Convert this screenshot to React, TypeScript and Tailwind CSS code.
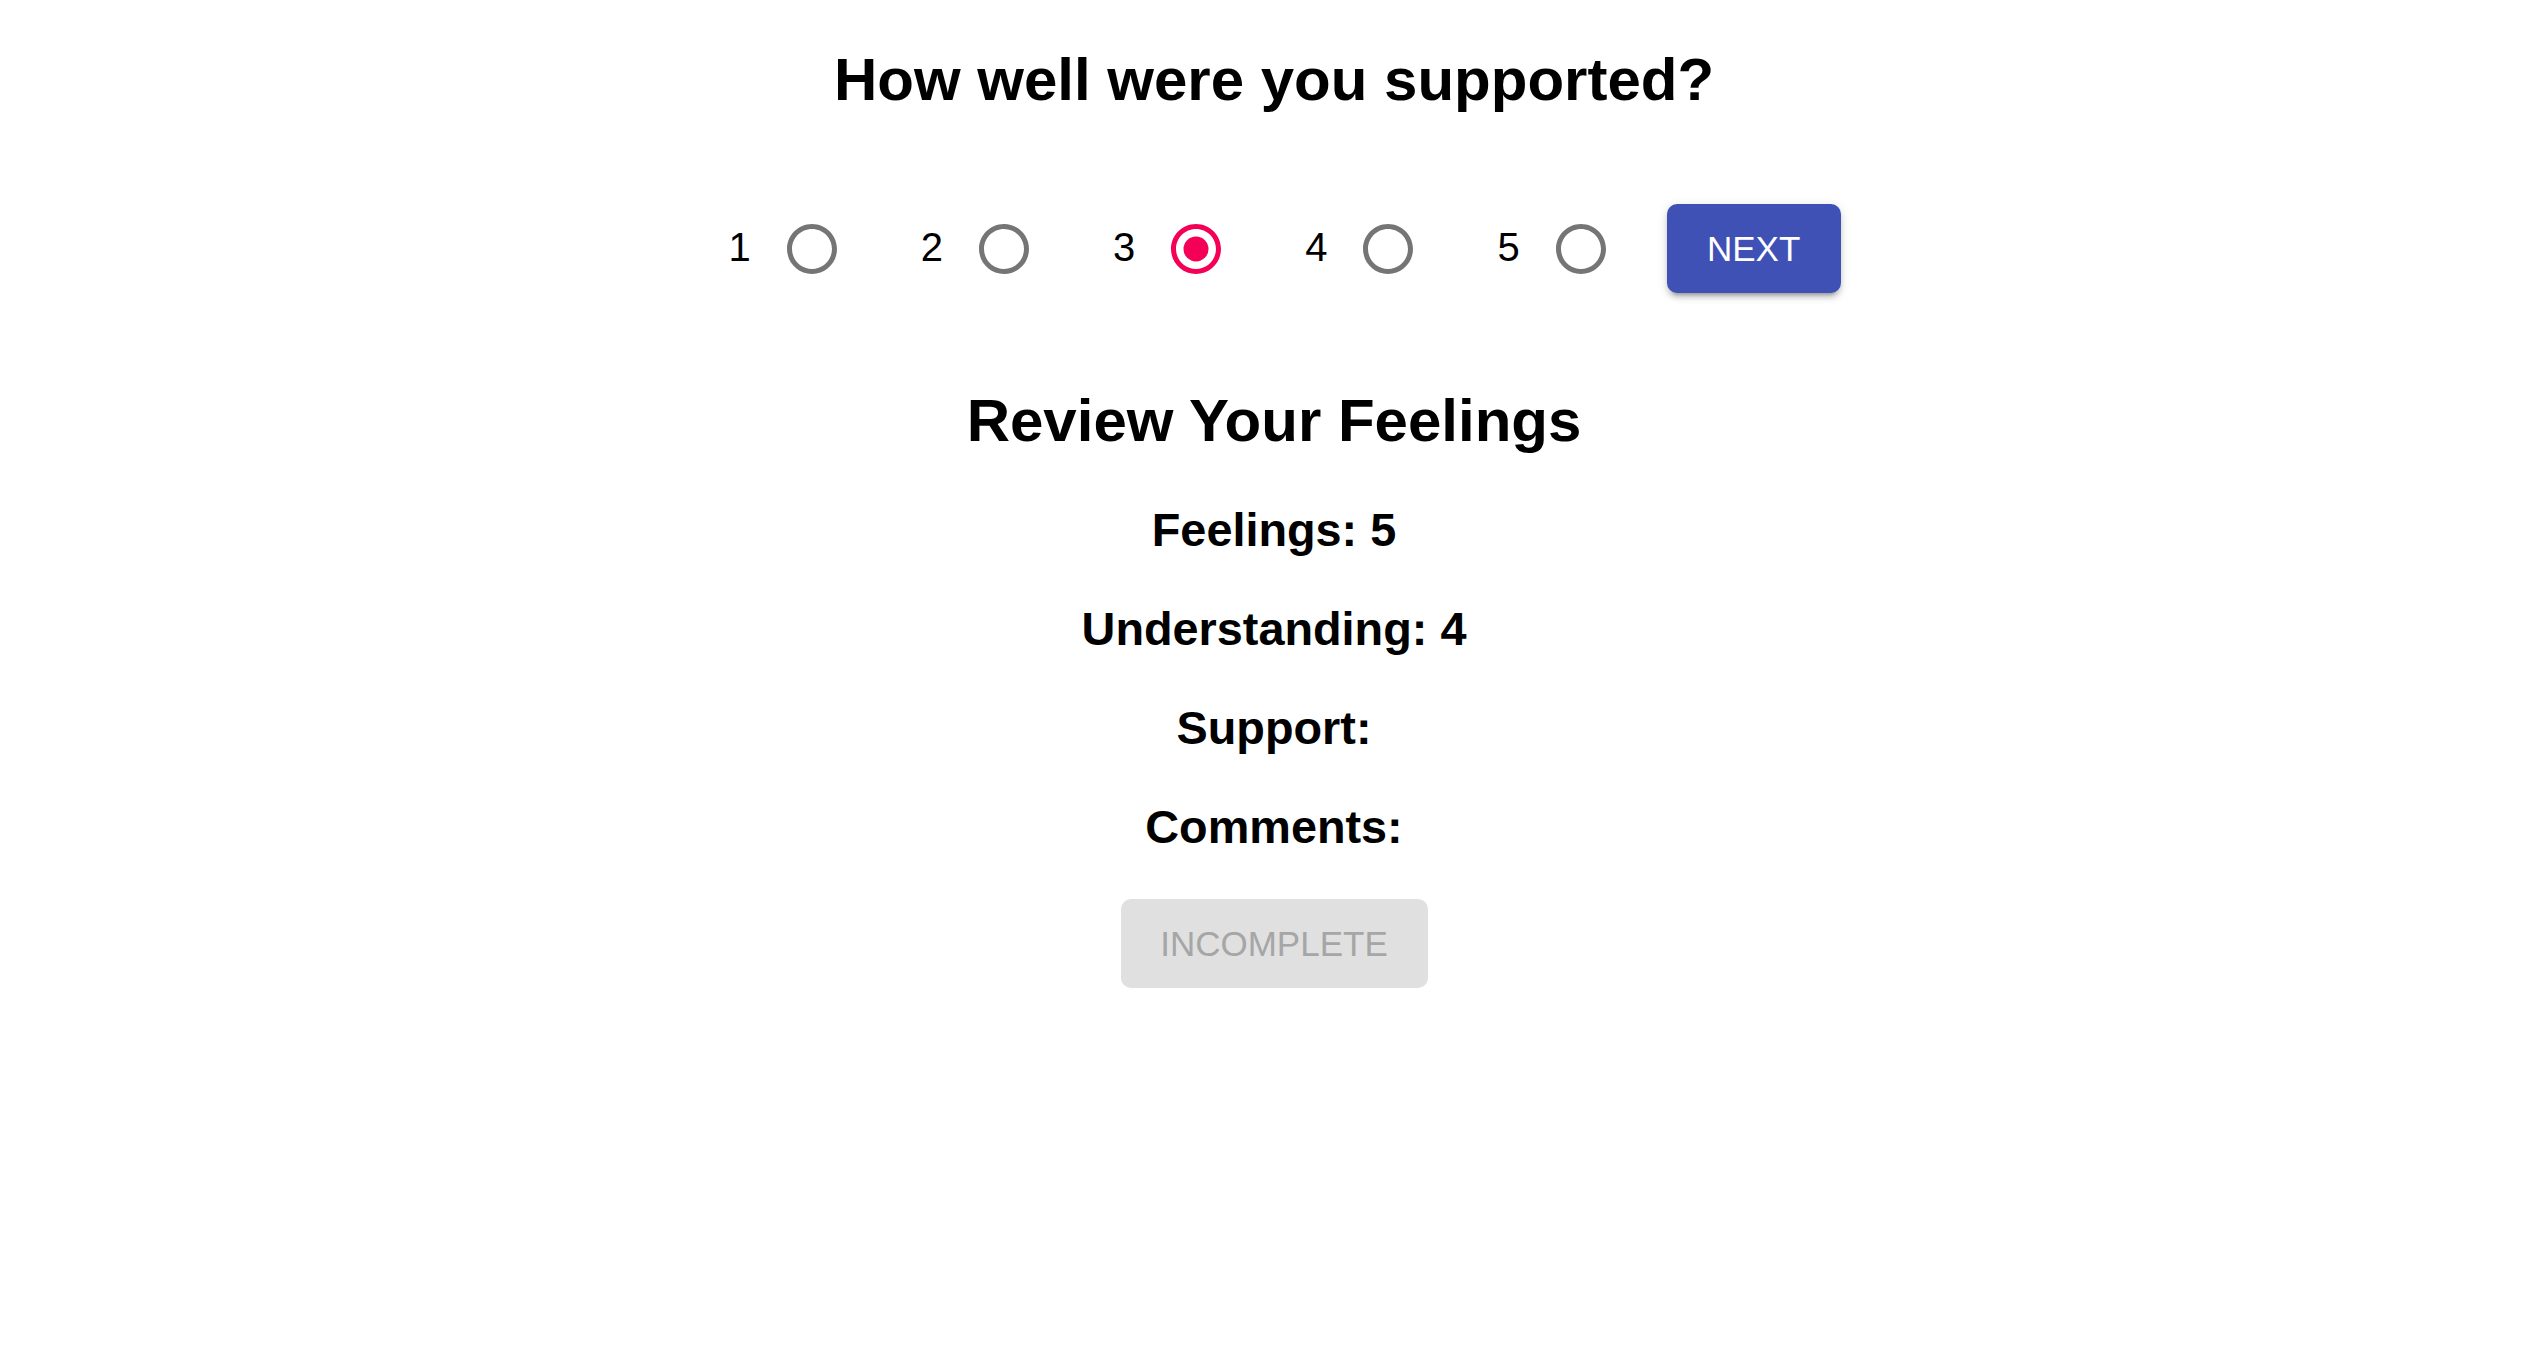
import React, { useState } from 'react';

const scores = [1, 2, 3, 4, 5];

function RadioIcon({ checked }: { checked: boolean }) {
  const color = checked ? '#f50057' : '#757575';
  return (
    <svg width="50" height="50" viewBox="2 2 20 20" className="shrink-0">
      <path
        fill={color}
        d="M12 2C6.48 2 2 6.48 2 12s4.48 10 10 10 10-4.48 10-10S17.52 2 12 2zm0 18c-4.42 0-8-3.58-8-8s3.58-8 8-8 8 3.58 8 8-3.58 8-8 8z"
      />
      {checked && <circle cx="12" cy="12" r="5" fill={color} />}
    </svg>
  );
}

export default function App() {
  const [support, setSupport] = useState(3);

  const review = [
    { label: 'Feelings', value: '5' },
    { label: 'Understanding', value: '4' },
    { label: 'Support', value: '' },
    { label: 'Comments', value: '' },
  ];

  return (
    <div className="min-h-screen bg-white text-black font-['Liberation_Sans',Arial,Helvetica,sans-serif]">
      <div className="flex flex-col items-center pt-[45px]">
        <h2 className="text-[60px] leading-[69px] font-bold">How well were you supported?</h2>

        <div className="flex items-center gap-[61px] mt-[90px] pl-[21px]">
          <div className="flex items-center gap-[84px]">
            {scores.map((n) => (
              <label key={n} className="flex items-center gap-[36px] cursor-pointer" onClick={() => setSupport(n)}>
                <span className="text-[40px] leading-[46px] mb-[4px]">{n}</span>
                <RadioIcon checked={support === n} />
              </label>
            ))}
          </div>
          <button className="w-[174px] h-[89px] rounded-[10px] bg-[#3f51b5] text-white text-[35px] leading-none shadow-[0_7px_3px_-5px_rgba(0,0,0,0.2),0_5px_5px_0_rgba(0,0,0,0.14),0_2px_12px_0_rgba(0,0,0,0.12)]">
            NEXT
          </button>
        </div>

        <h2 className="text-[60px] leading-[69px] font-bold mt-[93px]">Review Your Feelings</h2>

        <div className="flex flex-col items-center gap-[46px] mt-[49px]">
          {review.map((r) => (
            <h3 key={r.label} className="text-[46.8px] leading-[53px] font-bold">
              {r.label}: {r.value}
            </h3>
          ))}
        </div>

        <button
          disabled
          className="mt-[45px] w-[307px] h-[89px] rounded-[10px] bg-[#e0e0e0] text-[#a6a6a6] text-[35px] leading-none"
        >
          INCOMPLETE
        </button>
      </div>
    </div>
  );
}
